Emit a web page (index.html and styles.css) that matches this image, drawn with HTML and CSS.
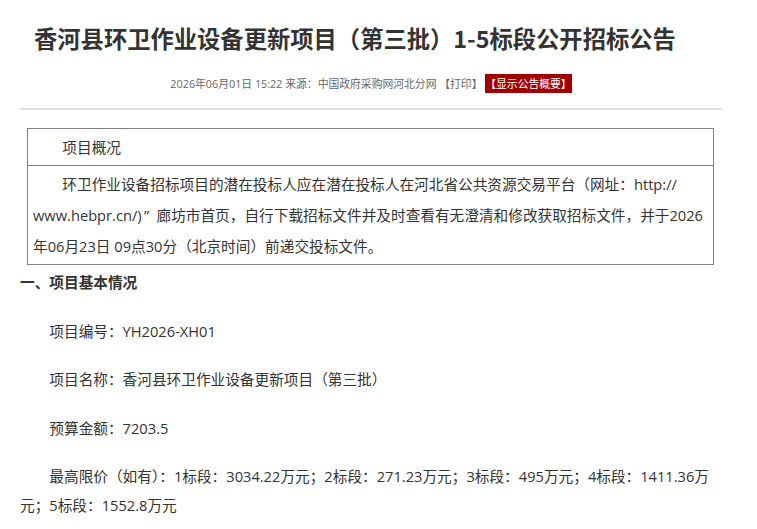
FILE: index.html
```html
<!DOCTYPE html>
<html lang="zh-CN">
<head>
    <meta charset="UTF-8">
    <meta name="viewport" content="width=device-width, initial-scale=1.0">
    <title>香河县环卫作业设备更新项目（第三批）1-5标段公开招标公告</title>
    <link rel="stylesheet" href="styles.css">
</head>
<body>
    <div class="article">
        <h1 class="article-title">香河县环卫作业设备更新项目（第三批）1-5标段公开招标公告</h1>
        <div class="article-meta">
            2026年06月01日 15:22 来源：中国政府采购网河北分网 <span class="print">【打印】</span>
            <span class="summary-btn">【显示公告概要】</span>
        </div>

        <div class="article-body">
            <!-- 项目概况 box -->
            <table class="overview">
                <tr>
                    <td class="indent">项目概况</td>
                </tr>
                <tr>
                    <td class="indent">环卫作业设备招标项目的潜在投标人应在潜在投标人在河北省公共资源交易平台（网址：http://<wbr>www.hebpr.cn/)&thinsp;”&ensp;廊坊市首页，自行下载招标文件并及时查看有无澄清和修改获取招标文件，并于2026年06月23日 09点30分（北京时间）前递交投标文件。</td>
                </tr>
            </table>

            <p class="section-title">一、项目基本情况</p>
            <p class="indent">项目编号：YH2026-XH01</p>
            <p class="indent">项目名称：香河县环卫作业设备更新项目（第三批）</p>
            <p class="indent">预算金额：7203.5</p>
            <p class="indent">最高限价（如有）：1标段：3034.22万元；2标段：271.23万元；3标段：495万元；4标段：1411.36万元；5标段：1552.8万元</p>
        </div>
    </div>
</body>
</html>
```

FILE: styles.css
```css
* {
    margin: 0;
    padding: 0;
    box-sizing: border-box;
}

body {
    font-family: "Open Sans", "Noto Sans CJK SC", sans-serif;
    font-size: 11pt;
    color: #333;
    background: #fff;
}

.article {
    width: 702px;
    margin-left: 20px;
}

/* Header */
.article-title {
    font-family: "Noto Sans CJK SC", sans-serif;
    font-size: 23.3px;
    font-weight: bold;
    color: #333;
    line-height: 34px;
    padding: 21px 0 0 14px;
}

.article-meta {
    font-size: 10.8px;
    color: #666;
    text-align: center;
    line-height: 20px;
    margin-top: 19px;
    padding-bottom: 14px;
    border-bottom: 2px solid #e3e3e3;
}

.summary-btn {
    background: #a00000;
    color: #fff;
    padding: 2px 0;
}

/* Body */
.article-body {
    width: 694px;
    padding-top: 18px;
}

.indent {
    text-indent: 2em;
}

.overview {
    width: 687px;
    margin-left: 7px;
    border-collapse: collapse;
}

.overview td {
    border: 1px solid #808080;
    padding: 3px 5px 2px;
    line-height: 31px;
}

.article-body p {
    line-height: 29px;
    margin-bottom: 19.5px;
}

.article-body .section-title {
    font-weight: bold;
    margin-top: 3px;
}
```
